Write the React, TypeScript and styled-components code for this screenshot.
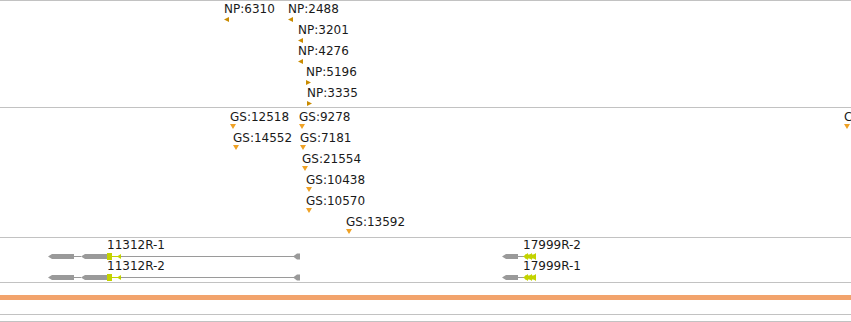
import React from 'react';
import styled, { createGlobalStyle } from 'styled-components';

const GlobalStyle = createGlobalStyle`
  html, body {
    margin: 0;
    padding: 0;
    background: #ffffff;
    overflow: hidden;
  }
  body {
    font-family: "DejaVu Sans", Verdana, sans-serif;
  }
`;

const ROW_PITCH = 21;

const Browser = styled.div`
  width: 851px;
  height: 322px;
  overflow: hidden;
  display: flex;
  flex-direction: column;
  background: #ffffff;
`;

const Track = styled.div<{ $height?: number }>`
  position: relative;
  box-sizing: border-box;
  flex: ${props => (props.$height ? 'none' : '1')};
  height: ${props => (props.$height ? `${props.$height}px` : 'auto')};
  border-top: 1px solid #c2c2c2;
  overflow: hidden;
`;

const Label = styled.div`
  position: absolute;
  font-size: 12px;
  line-height: 14px;
  white-space: nowrap;
  color: #1a1a1a;
`;

const Glyph = styled.svg`
  position: absolute;
  display: block;
  overflow: visible;
`;

const Band = styled.div`
  margin-top: 12px;
  height: 5px;
  background: #f2a36c;
`;

type Strand = 'left' | 'right' | 'down';

interface Marker {
  name: string;
  x: number;
  row: number;
  strand: Strand;
}

const npFeatures: Marker[] = [
  { name: 'NP:6310', x: 224, row: 0, strand: 'left' },
  { name: 'NP:2488', x: 288, row: 0, strand: 'left' },
  { name: 'NP:3201', x: 298, row: 1, strand: 'left' },
  { name: 'NP:4276', x: 298, row: 2, strand: 'left' },
  { name: 'NP:5196', x: 306, row: 3, strand: 'right' },
  { name: 'NP:3335', x: 307, row: 4, strand: 'right' },
];

// the last one runs off the right edge of the view, only its first letter shows
const gsFeatures: Marker[] = [
  { name: 'GS:12518', x: 230, row: 0, strand: 'down' },
  { name: 'GS:9278', x: 299, row: 0, strand: 'down' },
  { name: 'C', x: 844, row: 0, strand: 'down' },
  { name: 'GS:14552', x: 233, row: 1, strand: 'down' },
  { name: 'GS:7181', x: 300, row: 1, strand: 'down' },
  { name: 'GS:21554', x: 302, row: 2, strand: 'down' },
  { name: 'GS:10438', x: 306, row: 3, strand: 'down' },
  { name: 'GS:10570', x: 306, row: 4, strand: 'down' },
  { name: 'GS:13592', x: 346, row: 5, strand: 'down' },
];

const arrowPoints: Record<Strand, string> = {
  left: '0,2.5 5,0 5,5',
  right: '5,2.5 0,0 0,5',
  down: '0,0 6,0 3,5',
};

function MarkerFeature({ item, color, labelTop }: { item: Marker; color: string; labelTop: number }) {
  const top = item.row * ROW_PITCH;
  return (
    <>
      <Label style={{ left: item.x, top: top + labelTop }}>{item.name}</Label>
      <Glyph
        width={item.strand === 'down' ? 6 : 5}
        height={5}
        style={{ left: item.x, top: top + 16 }}
      >
        <polygon points={arrowPoints[item.strand]} fill={color} />
      </Glyph>
    </>
  );
}

const GRAY = '#9a9a9a';
const LIME = '#c3d300';

function LongGene({ top }: { top: number }) {
  // 11312R: exons on the minus strand, spanning 47..300
  return (
    <Glyph width={254} height={9} style={{ left: 47, top }}>
      <line x1={27} y1={4.5} x2={34} y2={4.5} stroke={GRAY} strokeWidth={1} />
      <line x1={74} y1={4.5} x2={247} y2={4.5} stroke={GRAY} strokeWidth={1} />
      <polygon points="1,4.5 5,2 27,2 27,7 5,7" fill={GRAY} />
      <polygon points="34,4.5 38,2 60,2 60,7 38,7" fill={GRAY} />
      <rect x={60} y={1} width={5} height={7} fill={LIME} />
      <line x1={65} y1={4.5} x2={71} y2={4.5} stroke={LIME} strokeWidth={1} />
      <polygon points="70,4.5 74,2 74,7" fill={LIME} />
      <polygon points="246,4.5 250,1.5 253,1.5 253,7.5 250,7.5" fill={GRAY} />
    </Glyph>
  );
}

function ShortGene({ top }: { top: number }) {
  // 17999R: short transcript, 501..536
  return (
    <Glyph width={36} height={9} style={{ left: 501, top }}>
      <line x1={17} y1={4.5} x2={23} y2={4.5} stroke={GRAY} strokeWidth={1} />
      <polygon points="1,4.5 5,2 17,2 17,7 5,7" fill={GRAY} />
      <rect x={24} y={2.5} width={11} height={4} fill={LIME} />
      <polygon points="22,4.5 27,1 27,8" fill={LIME} />
      <polygon points="26,4.5 31,1 31,8" fill={LIME} />
      <polygon points="30,4.5 35,1 35,8" fill={LIME} />
    </Glyph>
  );
}

export default function App() {
  return (
    <>
      <GlobalStyle />
      <Browser>
        <Track $height={107}>
          {npFeatures.map(item => (
            <MarkerFeature key={item.name} item={item} color="#c98b00" labelTop={1} />
          ))}
        </Track>

        <Track $height={130}>
          {gsFeatures.map(item => (
            <MarkerFeature key={item.name} item={item} color="#f0a225" labelTop={2} />
          ))}
        </Track>

        <Track $height={45}>
          <Label style={{ left: 107, top: 0 }}>11312R-1</Label>
          <LongGene top={14} />
          <Label style={{ left: 107, top: 21 }}>11312R-2</Label>
          <LongGene top={35} />

          <Label style={{ left: 523, top: 0 }}>17999R-2</Label>
          <ShortGene top={14} />
          <Label style={{ left: 523, top: 21 }}>17999R-1</Label>
          <ShortGene top={35} />
        </Track>

        <Track $height={32}>
          <Band />
        </Track>

        <Track $height={7} />
        <Track />
      </Browser>
    </>
  );
}
